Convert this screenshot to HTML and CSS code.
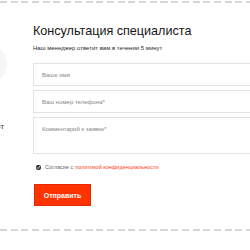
FILE: index.html
```html
<!DOCTYPE html>
<html lang="ru">
<head>
  <meta charset="UTF-8" />
  <meta name="viewport" content="width=device-width, initial-scale=1.0" />
  <title>Консультация специалиста</title>
  <link rel="stylesheet" href="styles.css">
</head>
<body>
  <div class="dash"></div>
  <div class="consult">
    <div class="side">
      <div class="avatar"></div>
      <div class="side-text">Эксперт</div>
    </div>
    <form class="form" onsubmit="return false">
      <h2>Консультация специалиста</h2>
      <p class="lead">Наш менеджер ответит вам в течении 5 минут</p>
      <input class="field" type="text" placeholder="Ваше имя" />
      <input class="field" type="tel" placeholder="Ваш номер телефона*" />
      <textarea class="field area" placeholder="Комментарий к заявке*"></textarea>
      <label class="agree"><input type="checkbox" checked /> Согласие с <a href="#">политикой конфиденциальности</a></label>
      <button type="submit">Отправить</button>
    </form>
  </div>
  <div class="dash"></div>
</body>
</html>
```

FILE: styles.css
```css
* { box-sizing: border-box; }
body {
  margin: 0;
  font-family: 'Liberation Sans', Arial, sans-serif;
  background: #fff;
  color: #222;
  overflow: hidden;
}
.dash {
  height: 2px;
  margin-top: 1px;
  background: repeating-linear-gradient(to right, #d6d6d6 0 7px, transparent 7px 10.7px);
}
.consult {
  display: flex;
  height: 225px;
}
.side {
  width: 33px;
  flex-shrink: 0;
  overflow: hidden;
}
.avatar {
  width: 60px;
  height: 48px;
  border-radius: 50%;
  background: #f5f5f5;
  margin: 37px 0 0 -53px;
}
.side-text {
  font-size: 8px;
  color: #333;
  margin: 34px 0 0 -26px;
}
.form {
  flex: 1;
  min-width: 0;
  padding-top: 21px;
}
h2 {
  margin: 0;
  font-size: 12.6px;
  font-weight: normal;
  color: #151515;
}
.lead {
  margin: 7px 0 12px;
  font-size: 6px;
  color: #2a2a2a;
}
.field {
  display: block;
  width: 240px;
  height: 23px;
  margin: 0 0 4px;
  padding: 0 8px;
  border: 1px solid #e2e2e2;
  background: #fff;
  font: 6px 'Liberation Sans', Arial, sans-serif;
  color: #333;
  outline: none;
}
.field::placeholder {
  color: #888;
}
.area {
  height: 37px;
  padding-top: 8px;
  resize: none;
}
.agree {
  display: flex;
  align-items: center;
  margin: 10px 0 0 3px;
  font-size: 5.5px;
  color: #666;
  white-space: nowrap;
}
.agree input {
  width: 5px;
  height: 5px;
  margin: 0 4px 0 0;
  accent-color: #333;
}
.agree a {
  color: #ff3d1a;
  text-decoration: none;
  margin-left: 2px;
}
button {
  display: block;
  width: 57px;
  height: 22px;
  margin-top: 14px;
  margin-left: 1px;
  border: 1px solid #e42a00;
  background: #ff3300;
  color: #fff;
  font: bold 7px 'Liberation Sans', Arial, sans-serif;
  cursor: pointer;
}
```
